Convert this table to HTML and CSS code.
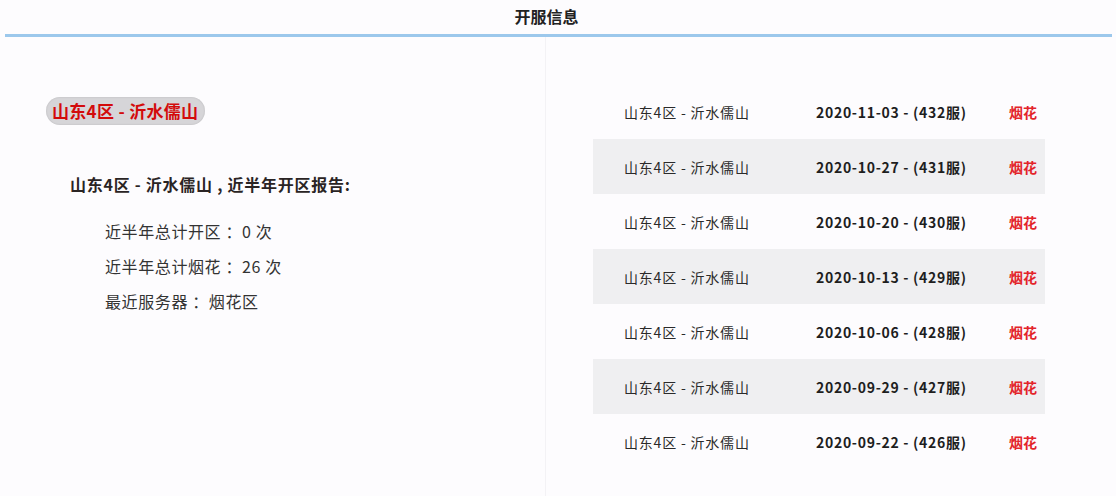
FILE: index.html
```html
<!DOCTYPE html>
<html lang="zh">
<head>
<meta charset="utf-8">
<link rel="stylesheet" href="styles.css">
</head>
<body>
<div class="page">
  <header class="head">
    <h1 class="title">开服信息</h1>
  </header>
  <main class="content">
    <section class="left">
      <div class="badge">山东4区 - 沂水儒山</div>
      <h2 class="report">山东4区 - 沂水儒山 , 近半年开区报告:</h2>
      <ul class="stats">
        <li>近半年总计开区 ：0 次</li>
        <li>近半年总计烟花 ：26 次</li>
        <li>最近服务器 ：烟花区</li>
      </ul>
    </section>
    <section class="right">
      <div class="row"><span class="c1">山东4区 - 沂水儒山</span><span class="c2">2020-11-03 - (432服)</span><span class="c3">烟花</span></div>
      <div class="row alt"><span class="c1">山东4区 - 沂水儒山</span><span class="c2">2020-10-27 - (431服)</span><span class="c3">烟花</span></div>
      <div class="row"><span class="c1">山东4区 - 沂水儒山</span><span class="c2">2020-10-20 - (430服)</span><span class="c3">烟花</span></div>
      <div class="row alt"><span class="c1">山东4区 - 沂水儒山</span><span class="c2">2020-10-13 - (429服)</span><span class="c3">烟花</span></div>
      <div class="row"><span class="c1">山东4区 - 沂水儒山</span><span class="c2">2020-10-06 - (428服)</span><span class="c3">烟花</span></div>
      <div class="row alt"><span class="c1">山东4区 - 沂水儒山</span><span class="c2">2020-09-29 - (427服)</span><span class="c3">烟花</span></div>
      <div class="row"><span class="c1">山东4区 - 沂水儒山</span><span class="c2">2020-09-22 - (426服)</span><span class="c3">烟花</span></div>
    </section>
  </main>
</div>
</body>
</html>
```
FILE: styles.css
```css
* { box-sizing: border-box; }
html, body {
  margin: 0;
  padding: 0;
  background: #fdfcfe;
  font-family: "Noto Sans CJK SC", "Liberation Sans", sans-serif;
  color: #2a2a2a;
}
.page {
  width: 1116px;
  height: 496px;
  overflow: hidden;
}
.head {
  margin: 0 4px 0 5px;
  padding-right: 24px;
  height: 37px;
  border-bottom: 3px solid #9cc8ec;
  display: flex;
  justify-content: center;
}
.title {
  margin: 5px 0 0;
  font-size: 16px;
  font-weight: 700;
  color: #222;
  line-height: 22px;
}
.content {
  display: flex;
}
.left {
  width: 546px;
  height: 459px;
  border-right: 1px solid #f3f2f5;
  padding: 60px 0 0 46px;
}
.badge {
  display: inline-block;
  background: #d6d5d8;
  border-radius: 14px;
  padding: 3px 7px 3px 6px;
  height: 28px;
  line-height: 22px;
  font-size: 17px;
  font-weight: 700;
  color: #d30b0b;
  letter-spacing: 0.3px;
  box-shadow: inset 0 0 2px rgba(0,0,0,0.15);
}
.report {
  margin: 47px 0 0 24px;
  font-size: 16px;
  font-weight: 700;
  line-height: 24px;
  color: #2a2424;
  letter-spacing: 0.75px;
}
.stats {
  list-style: none;
  margin: 18px 0 0 59px;
  padding: 0;
}
.stats li {
  font-size: 16px;
  line-height: 35px;
  color: #333;
  letter-spacing: 0.6px;
}
.right {
  padding: 47px 0 0 47px;
  display: flex;
  flex-direction: column;
}
.row {
  width: 452px;
  height: 55px;
  display: flex;
  align-items: center;
  font-size: 14px;
}
.row.alt { background: #efeff1; }
.c1 {
  width: 223px;
  padding-left: 31px;
  color: #2a2a2a;
  letter-spacing: 0.8px;
  white-space: nowrap;
}
.c2 {
  width: 193px;
  font-weight: 700;
  color: #1e1e1e;
  letter-spacing: 0.7px;
  white-space: nowrap;
}
.c3 {
  font-weight: 700;
  color: #e3242b;
}
```
